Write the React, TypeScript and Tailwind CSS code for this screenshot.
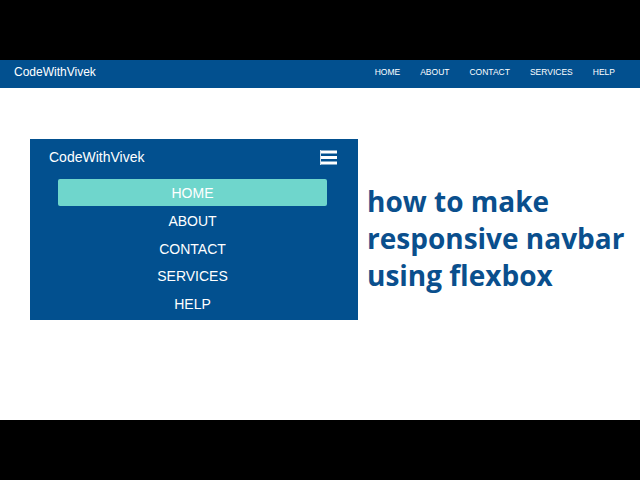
export default function App() {
  const links = ["HOME", "ABOUT", "CONTACT", "SERVICES", "HELP"];
  return (
    <div className="w-[640px] h-[480px] flex flex-col bg-white font-['Liberation_Sans',Arial,sans-serif]">
      {/* letterbox top */}
      <div className="h-[60px] bg-black" />

      {/* desktop navbar */}
      <div className="h-[28px] pb-[4px] bg-[#02508f] flex items-center justify-between pl-[14px] pr-[25px] text-white">
        <span className="text-[12px]">CodeWithVivek</span>
        <ul className="flex gap-[20px] text-[8.5px]">
          {links.map((l) => (
            <li key={l}>{l}</li>
          ))}
        </ul>
      </div>

      {/* content */}
      <div className="flex-1 flex items-start pt-[51px] pl-[30px]">
        <div className="w-[328px] h-[181px] bg-[#02508f] text-white flex flex-col pt-[10px]">
          <div className="flex items-center justify-between pl-[19px] pr-[21px] h-[16px]">
            <span className="text-[14px]">CodeWithVivek</span>
            <svg width="17" height="17" viewBox="0 0 17 17">
              <rect x="0" y="1" width="1" height="15" fill="#cfe0ee" />
              <rect x="1" y="1.5" width="16" height="3" fill="#fff" />
              <rect x="1" y="7" width="16" height="3" fill="#fff" />
              <rect x="1" y="12.5" width="16" height="3" fill="#fff" />
            </svg>
          </div>
          <ul className="mt-[14px] pl-[28px] pr-[31px] flex flex-col text-[14px] text-center">
            {links.map((l, i) => (
              <li
                key={l}
                className={
                  i === 0
                    ? "h-[27px] leading-[27px] pt-[1px] bg-[#6fd6cc] rounded-[2px]"
                    : "h-[27.7px] leading-[27.7px] pt-[2px]"
                }
              >
                {l}
              </li>
            ))}
          </ul>
        </div>
        <h1 className="ml-[9px] mt-[44px] font-['Open_Sans',sans-serif] font-bold text-[28px] leading-[37px] text-[#0a4f8d]">
          how to make
          <br />
          responsive navbar
          <br />
          using flexbox
        </h1>
      </div>

      {/* letterbox bottom */}
      <div className="h-[60px] bg-black" />
    </div>
  );
}
